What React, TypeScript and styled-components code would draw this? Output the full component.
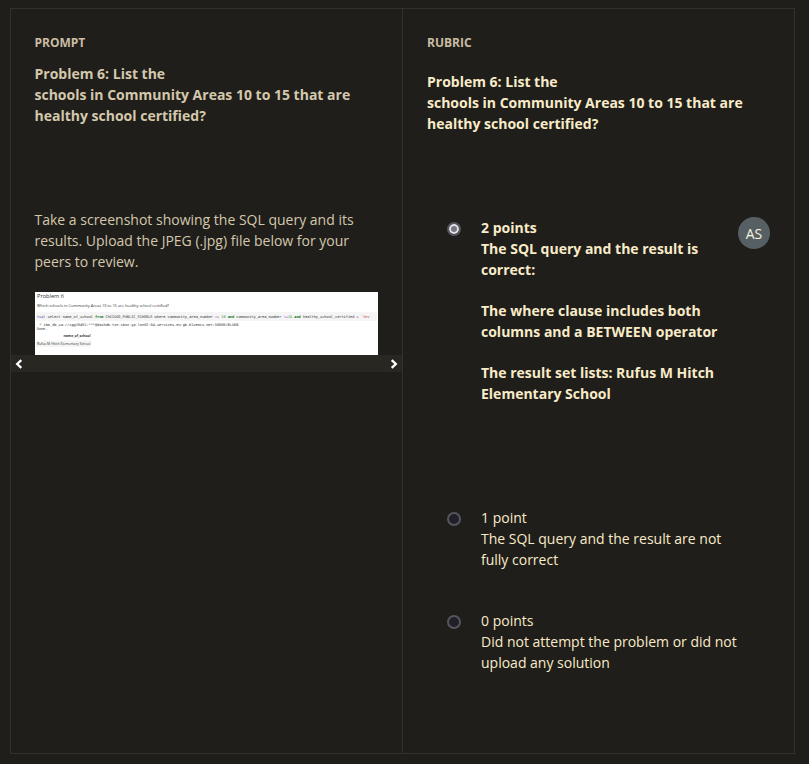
import React from 'react';
import styled, { createGlobalStyle } from 'styled-components';

const Global = createGlobalStyle`
  * { box-sizing: border-box; }
  body {
    margin: 0;
    background: #1f1e1b;
    font: 14px/21px "Open Sans", "Noto Sans", sans-serif;
    overflow: hidden;
  }
`;

const Page = styled.main`
  width: 809px;
  height: 764px;
  padding: 8px 14px 10px 10px;
`;

const Panels = styled.div`
  display: grid;
  grid-template-columns: 392px 1fr;
  height: 746px;
  border: 1px solid #32312e;
`;

const Prompt = styled.section`
  border-right: 1px solid #32312e;
  color: #d4c8ac;
`;

const Rubric = styled.section`
  padding: 0 24px;
  color: #f9ebc8;
`;

const PromptBody = styled.div`
  height: 346px;
  padding: 0 24px 0 23.5px;
`;

const Label = styled.h2`
  margin: 0;
  padding-top: 25px;
  font-size: 12px;
  line-height: 18px;
  font-weight: 700;
  color: #cabda2;
`;

const Question = styled.h3<{ $top: number }>`
  margin: ${(p) => p.$top}px 0 0;
  font-size: 14px;
  line-height: 21px;
  font-weight: 700;
`;

const Instructions = styled.p`
  margin: 83px 0 20px;
`;

const Picture = styled.svg`
  display: block;
  width: 343px;
  height: 63px;
  margin-left: 0.5px;
`;

const ScrollBar = styled.div`
  display: flex;
  align-items: center;
  justify-content: space-between;
  height: 17px;
  padding: 0 4px;
  background: #282722;
`;

const Chevron = styled.svg`
  width: 8px;
  height: 10px;
  fill: none;
  stroke: #fff;
  stroke-width: 2.3;
`;

const Options = styled.div`
  padding: 83px 0 0 20px;
`;

const Option = styled.div<{ $height: number; $bold?: boolean }>`
  display: grid;
  grid-template-columns: 34px 245px auto;
  align-items: start;
  height: ${(p) => p.$height}px;
  font-weight: ${(p) => (p.$bold ? 700 : 400)};
`;

const Radio = styled.span<{ $on?: boolean }>`
  width: 14px;
  height: 14px;
  margin-top: 5px;
  border: 2px solid #56555c;
  border-radius: 50%;
  background: ${(p) => (p.$on ? '#77757d' : '#211f28')};
  box-shadow: ${(p) => (p.$on ? 'inset 0 0 0 2px #e4e1ec' : 'none')};
`;

const Copy = styled.div`
  p {
    margin: 0 0 20px;
    white-space: nowrap;
  }
`;

const Avatar = styled.span`
  display: grid;
  place-items: center;
  width: 32px;
  height: 32px;
  margin-left: 12px;
  padding-top: 1px;
  border-radius: 50%;
  background: #566064;
  color: #f9f3dc;
  font-weight: 400;
`;

const title = (
  <>
    Problem 6: List the
    <br />
    schools in Community Areas 10 to 15 that are
    <br />
    healthy school certified?
  </>
);

type Token = { x: number; w: number; text: string; color?: string; bold?: boolean };

const query: Token[] = [
  { x: 2, w: 8.5, text: '%sql', color: '#5f4bb5' },
  { x: 12.5, w: 45.5, text: 'select name_of_school' },
  { x: 60, w: 8.5, text: 'from', color: '#16771b', bold: true },
  { x: 70.5, w: 47, text: 'CHICAGO_PUBLIC_SCHOOLS' },
  { x: 119.5, w: 11, text: 'where' },
  { x: 132.5, w: 45.5, text: 'community_area_number' },
  { x: 180, w: 4, text: '>=', color: '#a63cc5' },
  { x: 186.3, w: 4.2, text: '10', color: '#18822a' },
  { x: 192.7, w: 6.5, text: 'and', color: '#087210', bold: true },
  { x: 201.3, w: 45, text: 'community_area_number' },
  { x: 248.7, w: 4, text: '<=', color: '#a63cc5' },
  { x: 253, w: 4.2, text: '15', color: '#18822a' },
  { x: 259.3, w: 6.5, text: 'and', color: '#087210', bold: true },
  { x: 268, w: 51.3, text: 'healthy_school_certified' },
  { x: 321.5, w: 2, text: '=', color: '#a63cc5' },
  { x: 326, w: 10.3, text: "'Yes'", color: '#c44040' },
];

const QueryShot = () => (
  <Picture viewBox="0 0 343 63" role="img" aria-label="SQL query and result">
    <rect width="343" height="63" fill="#fff" />
    <rect x="1" y="20" width="341" height="9" fill="#f5f5f5" />
    <rect x="1" y="48.5" width="55" height="6.5" fill="#f5f5f5" />
    <g fontFamily="Open Sans, sans-serif" fill="#333">
      <text x="2" y="5.8" fontSize="5.6" textLength="27" lengthAdjust="spacingAndGlyphs">Problem 6</text>
      <text x="2" y="15" fontSize="3.9" textLength="132" lengthAdjust="spacingAndGlyphs">Which schools in Community Areas 10 to 15 are healthy school certified?</text>
      <text x="28.5" y="45.2" fontSize="3.7" fontWeight="700" textLength="27" lengthAdjust="spacingAndGlyphs">name_of_school</text>
      <text x="2" y="53.2" fontSize="3.7" textLength="53.5" lengthAdjust="spacingAndGlyphs">Rufus M Hitch Elementary School</text>
    </g>
    <g fontFamily="DejaVu Sans Mono, monospace" fontSize="3.6" fill="#333">
      {query.map((t) => (
        <text
          key={t.x}
          x={t.x}
          y="25.6"
          fill={t.color}
          fontWeight={t.bold ? 700 : 400}
          textLength={t.w}
          lengthAdjust="spacingAndGlyphs"
        >
          {t.text}
        </text>
      ))}
      <text x="4.3" y="33.6" textLength="199" lengthAdjust="spacingAndGlyphs">* ibm_db_sa://xgg19491:***@dashdb-txn-sbox-yp-lon02-04.services.eu-gb.bluemix.net:50000/BLUDB</text>
      <text x="2" y="38.4" textLength="10" lengthAdjust="spacingAndGlyphs">Done.</text>
    </g>
  </Picture>
);

export default function App() {
  return (
    <Page>
      <Global />
      <Panels>
        <Prompt>
          <PromptBody>
            <Label>PROMPT</Label>
            <Question $top={11}>{title}</Question>
            <Instructions>
              Take a screenshot showing the SQL query and its
              <br />
              results. Upload the JPEG (.jpg) file below for your
              <br />
              peers to review.
            </Instructions>
            <QueryShot />
          </PromptBody>
          <ScrollBar>
            <Chevron viewBox="0 0 8 10"><path d="M6.3 1.2 2.2 5l4.1 3.8" /></Chevron>
            <Chevron viewBox="0 0 8 10"><path d="M1.7 1.2 5.8 5 1.7 8.8" /></Chevron>
          </ScrollBar>
        </Prompt>
        <Rubric>
          <Label>RUBRIC</Label>
          <Question $top={19}>{title}</Question>
          <Options>
            <Option $height={290} $bold>
              <Radio $on />
              <Copy>
                <p>2 points<br />The SQL query and the result is<br />correct:</p>
                <p>The where clause includes both<br />columns and a BETWEEN operator</p>
                <p>The result set lists: Rufus M Hitch<br />Elementary School</p>
              </Copy>
              <Avatar>AS</Avatar>
            </Option>
            <Option $height={103}>
              <Radio />
              <Copy><p>1 point<br />The SQL query and the result are not<br />fully correct</p></Copy>
            </Option>
            <Option $height={80}>
              <Radio />
              <Copy><p>0 points<br />Did not attempt the problem or did not<br />upload any solution</p></Copy>
            </Option>
          </Options>
        </Rubric>
      </Panels>
    </Page>
  );
}
